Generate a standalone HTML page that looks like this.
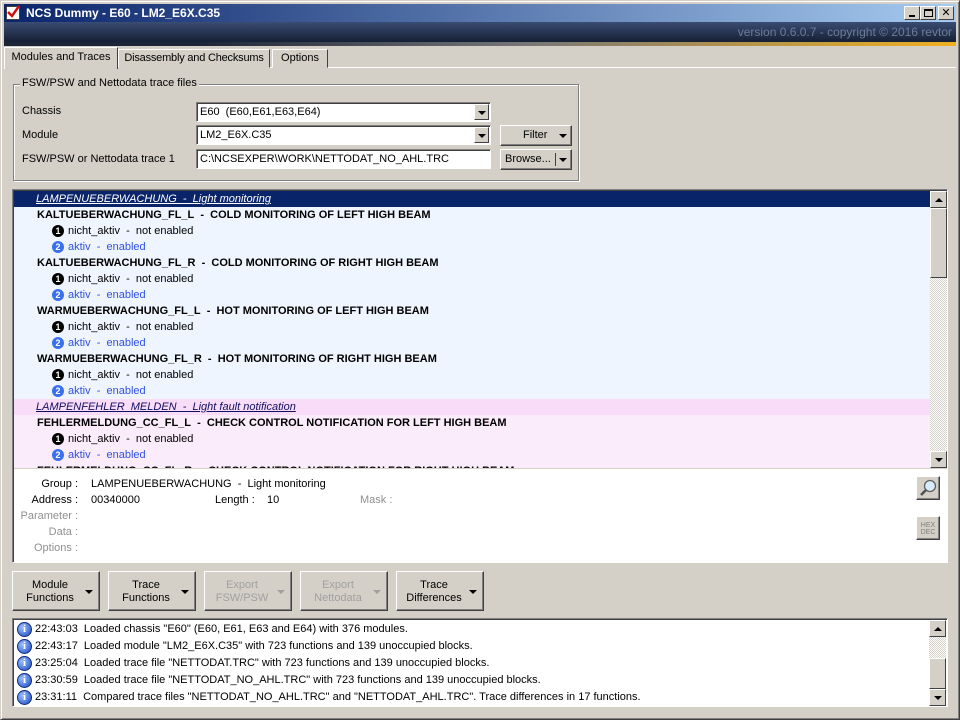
<!DOCTYPE html>
<html><head><meta charset="utf-8"><style>
*{box-sizing:border-box;margin:0;padding:0}
body{width:960px;height:720px;background:#d4d0c8;font-family:"Liberation Sans","DejaVu Sans",sans-serif;font-size:11px;color:#000;position:relative;overflow:hidden}
.a{position:absolute}
.win{left:0;top:0;width:960px;height:720px;border:1px solid #d4d0c8;border-right-color:#404040;border-bottom-color:#404040;box-shadow:inset 1px 1px #fff,inset -1px -1px #808080}
.title{left:4px;top:4px;width:952px;height:18px;background:linear-gradient(90deg,#0a246a,#a6caf0);color:#fff;font-weight:bold;font-size:12px;line-height:18px;padding-left:22px}
.banner{left:4px;top:22px;width:952px;height:24px;background:linear-gradient(180deg,#3a4c72,#0e1628);}
.gold{left:4px;top:42px;width:952px;height:4px;background:linear-gradient(90deg,#1c2438 0%,#1c2438 20%,#777 55%,#f0b020 100%)}
.ver{right:8px;top:25px;color:#6e7c98;font-size:12px}
.wb{top:6px;width:16px;height:14px;background:#d4d0c8;border:1px solid;border-color:#fff #404040 #404040 #fff;font-size:11px;font-weight:bold;text-align:center;line-height:12px}
.tab{top:49px;height:19px;border:1px solid;border-color:#fff #404040 transparent #fff;line-height:17px;text-align:center;background:#d4d0c8;white-space:nowrap}
.sunk{border:1px solid;border-color:#808080 #fff #fff #808080;box-shadow:inset 1px 1px #404040}
.combo{background:#fff;height:20px;line-height:18px;padding-left:3px}
.dd{position:absolute;right:1px;top:1px;width:15px;height:16px;background:#d4d0c8;border:1px solid;border-color:#fff #404040 #404040 #fff}
.tri{position:absolute;width:0;height:0;border-left:4px solid transparent;border-right:4px solid transparent;border-top:4px solid #000}
.btn{background:#d4d0c8;border:1px solid;border-color:#fff #404040 #404040 #fff;box-shadow:inset -1px -1px #808080}
.row{position:absolute;left:0;width:916px;height:16px;line-height:16px;white-space:nowrap}
.b{font-weight:bold;padding-left:23px}
.o{padding-left:38px}
.n{display:inline-block;width:12px;height:12px;border-radius:6px;color:#fff;font-size:9px;font-weight:bold;text-align:center;line-height:12px;vertical-align:top;margin-top:2px;margin-right:4px}
.bl{color:#3050e0}
.lbl{position:absolute;text-align:right;width:70px;left:8px}
.g{color:#909090}
.big{top:571px;width:88px;height:40px;text-align:center;line-height:13px;padding-top:7px;padding-right:12px}
.big .tri{right:6px;top:18px}
.dis{color:#a0a0a0}.dis .tri{border-top-color:#a0a0a0}
.lg{position:absolute;left:4px;height:17px;line-height:17px;white-space:nowrap}
.ic{display:inline-block;width:15px;height:15px;border-radius:8px;background:radial-gradient(circle at 35% 35%,#9cc0ff,#1848c0);color:#fff;font-weight:bold;font-family:"Liberation Serif",serif;font-size:11px;text-align:center;line-height:13px;vertical-align:top;margin-top:1px;margin-right:3px;border:1px solid #102a80}
.sb{background:repeating-conic-gradient(#d4d0c8 0 25%,#fff 0 50%) 0 0/2px 2px}
.sbb{position:absolute;left:0;width:17px;height:17px;background:#d4d0c8;border:1px solid;border-color:#fff #404040 #404040 #fff}
.up{position:absolute;left:4px;top:6px;width:0;height:0;border-left:4px solid transparent;border-right:4px solid transparent;border-bottom:4px solid #000}
.dn{position:absolute;left:4px;top:6px;width:0;height:0;border-left:4px solid transparent;border-right:4px solid transparent;border-top:4px solid #000}
</style></head><body>
<div class="a win"></div>
<div class="a title">NCS Dummy - E60 - LM2_E6X.C35</div>
<div class="a" style="left:6px;top:6px;width:14px;height:14px;background:#fff;border:1px solid #404040"><svg width="14" height="14" style="position:absolute;left:-1px;top:-2px"><path d="M2 7 L6 11 L13 1" stroke="#d01010" stroke-width="2.5" fill="none"/></svg></div>
<div class="a wb" style="left:904px"><span style="position:absolute;left:4px;top:8px;width:6px;height:2px;background:#000"></span></div>
<div class="a wb" style="left:920px"><span style="position:absolute;left:3px;top:2px;width:9px;height:8px;border:1px solid #000;border-top-width:2px"></span></div>
<div class="a wb" style="left:938px">✕</div>
<div class="a banner"></div>
<div class="a gold"></div>
<div class="a ver">version 0.6.0.7 - copyright © 2016 revtor</div>
<div class="a" style="left:4px;top:67px;width:952px;height:1px;background:#fff"></div>
<div class="a tab" style="left:4px;top:47px;width:114px;height:22px;border-bottom:none;line-height:18px">Modules and Traces</div>
<div class="a tab" style="left:118px;width:152px;letter-spacing:-0.2px">Disassembly and Checksums</div>
<div class="a tab" style="left:272px;width:56px">Options</div>

<div class="a" style="left:13px;top:84px;width:566px;height:97px;border:1px solid #808080;box-shadow:1px 1px #fff,inset 1px 1px #fff"></div>
<div class="a" style="left:20px;top:77px;background:#d4d0c8;padding:0 2px">FSW/PSW and Nettodata trace files</div>
<div class="a" style="left:22px;top:105px">Chassis</div>
<div class="a" style="left:22px;top:129px">Module</div>
<div class="a" style="left:22px;top:153px">FSW/PSW or Nettodata trace 1</div>
<div class="a sunk combo" style="left:196px;top:102px;width:295px">E60&nbsp; (E60,E61,E63,E64)<div class="dd"><div class="tri" style="left:3px;top:6px"></div></div></div>
<div class="a sunk combo" style="left:196px;top:125px;width:295px">LM2_E6X.C35<div class="dd"><div class="tri" style="left:3px;top:6px"></div></div></div>
<div class="a sunk combo" style="left:196px;top:149px;width:295px">C:\NCSEXPER\WORK\NETTODAT_NO_AHL.TRC</div>
<div class="a btn" style="left:500px;top:125px;width:72px;height:21px;line-height:19px;padding-left:22px">Filter<div class="tri" style="left:58px;top:8px"></div></div>
<div class="a btn" style="left:500px;top:149px;width:72px;height:21px;line-height:19px;padding-left:4px">Browse...<div style="position:absolute;left:54px;top:3px;width:1px;height:13px;background:#404040"></div><div class="tri" style="left:58px;top:8px"></div></div>

<div class="a sunk" style="left:12px;top:189px;width:936px;height:374px;background:#fff"></div>
<div class="a" style="left:14px;top:191px;width:916px;height:277px;overflow:hidden;background:#eef5ff">
<div class="row" style="top:0;background:#0a246a;color:#fff;font-style:italic;padding-left:22px"><u>LAMPENUEBERWACHUNG&nbsp; - &nbsp;Light monitoring</u></div>
<div class="row b" style="top:16px">KALTUEBERWACHUNG_FL_L&nbsp; - &nbsp;COLD MONITORING OF LEFT HIGH BEAM</div>
<div class="row o" style="top:32px"><span class="n" style="background:#000">1</span>nicht_aktiv&nbsp; - &nbsp;not enabled</div>
<div class="row o bl" style="top:48px"><span class="n" style="background:#3a70f0">2</span>aktiv&nbsp; - &nbsp;enabled</div>
<div class="row b" style="top:64px">KALTUEBERWACHUNG_FL_R&nbsp; - &nbsp;COLD MONITORING OF RIGHT HIGH BEAM</div>
<div class="row o" style="top:80px"><span class="n" style="background:#000">1</span>nicht_aktiv&nbsp; - &nbsp;not enabled</div>
<div class="row o bl" style="top:96px"><span class="n" style="background:#3a70f0">2</span>aktiv&nbsp; - &nbsp;enabled</div>
<div class="row b" style="top:112px">WARMUEBERWACHUNG_FL_L&nbsp; - &nbsp;HOT MONITORING OF LEFT HIGH BEAM</div>
<div class="row o" style="top:128px"><span class="n" style="background:#000">1</span>nicht_aktiv&nbsp; - &nbsp;not enabled</div>
<div class="row o bl" style="top:144px"><span class="n" style="background:#3a70f0">2</span>aktiv&nbsp; - &nbsp;enabled</div>
<div class="row b" style="top:160px">WARMUEBERWACHUNG_FL_R&nbsp; - &nbsp;HOT MONITORING OF RIGHT HIGH BEAM</div>
<div class="row o" style="top:176px"><span class="n" style="background:#000">1</span>nicht_aktiv&nbsp; - &nbsp;not enabled</div>
<div class="row o bl" style="top:192px"><span class="n" style="background:#3a70f0">2</span>aktiv&nbsp; - &nbsp;enabled</div>
<div class="row" style="top:208px;background:#f8dcf8;color:#101060;font-style:italic;padding-left:22px"><u>LAMPENFEHLER_MELDEN&nbsp; - &nbsp;Light fault notification</u></div>
<div class="row" style="top:224px;height:60px;background:#fbecfb"></div>
<div class="row b" style="top:224px">FEHLERMELDUNG_CC_FL_L&nbsp; - &nbsp;CHECK CONTROL NOTIFICATION FOR LEFT HIGH BEAM</div>
<div class="row o" style="top:240px"><span class="n" style="background:#000">1</span>nicht_aktiv&nbsp; - &nbsp;not enabled</div>
<div class="row o bl" style="top:256px"><span class="n" style="background:#3a70f0">2</span>aktiv&nbsp; - &nbsp;enabled</div>
<div class="row b" style="top:272px">FEHLERMELDUNG_CC_FL_R&nbsp; - &nbsp;CHECK CONTROL NOTIFICATION FOR RIGHT HIGH BEAM</div>
</div>
<div class="a sb" style="left:930px;top:191px;width:17px;height:277px">
<div class="sbb" style="top:0"><div class="up"></div></div>
<div class="sbb" style="top:17px;height:70px"></div>
<div class="sbb" style="top:260px"><div class="dn"></div></div>
</div>
<div class="a" style="left:14px;top:468px;width:933px;height:1px;background:#d4d0c8"></div>

<div class="lbl" style="top:478px">Group :</div>
<div class="lbl" style="top:494px">Address :</div>
<div class="lbl g" style="top:510px">Parameter :</div>
<div class="lbl g" style="top:526px">Data :</div>
<div class="lbl g" style="top:542px">Options :</div>
<div class="a" style="left:91px;top:478px">LAMPENUEBERWACHUNG&nbsp; - &nbsp;Light monitoring</div>
<div class="a" style="left:91px;top:494px">00340000</div>
<div class="a" style="left:215px;top:494px">Length :&nbsp;&nbsp;&nbsp; 10</div>
<div class="a g" style="left:360px;top:494px">Mask :</div>
<div class="a btn" style="left:916px;top:476px;width:24px;height:24px"><svg width="22" height="22"><circle cx="13" cy="9" r="5.5" fill="#d8ecff" stroke="#606060" stroke-width="1.3"/><path d="M9 13 L4 18" stroke="#505050" stroke-width="2.5"/></svg></div>
<div class="a btn" style="left:916px;top:516px;width:24px;height:24px;font-size:7px;line-height:7px;color:#808080;text-align:center;padding-top:5px">HEX<br>DEC</div>

<div class="a btn big" style="left:12px">Module<br>Functions<div class="tri"></div></div>
<div class="a btn big" style="left:108px">Trace<br>Functions<div class="tri"></div></div>
<div class="a btn big dis" style="left:204px">Export<br>FSW/PSW<div class="tri"></div></div>
<div class="a btn big dis" style="left:300px">Export<br>Nettodata<div class="tri"></div></div>
<div class="a btn big" style="left:396px">Trace<br>Differences<div class="tri"></div></div>

<div class="a sunk" style="left:12px;top:618px;width:936px;height:89px;background:#fff">
<div class="lg" style="top:2px"><span class="ic">i</span>22:43:03&nbsp; Loaded chassis "E60" (E60, E61, E63 and E64) with 376 modules.</div>
<div class="lg" style="top:19px"><span class="ic">i</span>22:43:17&nbsp; Loaded module "LM2_E6X.C35" with 723 functions and 139 unoccupied blocks.</div>
<div class="lg" style="top:36px"><span class="ic">i</span>23:25:04&nbsp; Loaded trace file "NETTODAT.TRC" with 723 functions and 139 unoccupied blocks.</div>
<div class="lg" style="top:53px"><span class="ic">i</span>23:30:59&nbsp; Loaded trace file "NETTODAT_NO_AHL.TRC" with 723 functions and 139 unoccupied blocks.</div>
<div class="lg" style="top:70px"><span class="ic">i</span>23:31:11&nbsp; Compared trace files "NETTODAT_NO_AHL.TRC" and "NETTODAT_AHL.TRC". Trace differences in 17 functions.</div>
<div class="sb" style="position:absolute;left:916px;top:1px;width:17px;height:85px">
<div class="sbb" style="top:0"><div class="up"></div></div>
<div class="sbb" style="top:38px;height:31px"></div>
<div class="sbb" style="top:69px"><div class="dn"></div></div>
</div>
</div>
</body></html>
